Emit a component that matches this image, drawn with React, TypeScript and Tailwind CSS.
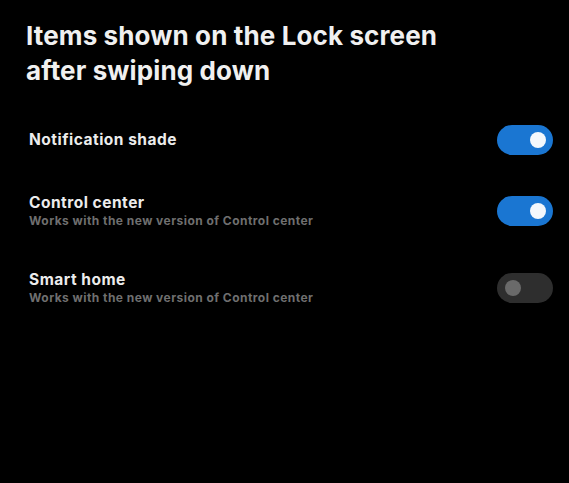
import React from "react";

type Item = { title: string; sub?: string; on: boolean; gap: string };

const items: Item[] = [
  { title: "Notification shade", on: true, gap: "mt-0" },
  { title: "Control center", sub: "Works with the new version of Control center", on: true, gap: "mt-[41px]" },
  { title: "Smart home", sub: "Works with the new version of Control center", on: false, gap: "mt-[47px]" },
];

function Toggle({ on }: { on: boolean }) {
  return on ? (
    <div className="flex h-[30px] w-[56px] shrink-0 items-center justify-end rounded-full bg-[#1a76d2] pr-[7px]">
      <div className="h-[16px] w-[16px] rounded-full bg-[#f4f8fc]" />
    </div>
  ) : (
    <div className="flex h-[30px] w-[56px] shrink-0 items-center rounded-full bg-[#2e2e2e] pl-[8px]">
      <div className="h-[16px] w-[16px] rounded-full bg-[#6a6a6a]" />
    </div>
  );
}

export default function App() {
  return (
    <div
      className="h-[483px] w-[569px] bg-black text-white"
      style={{ fontFamily: "Inter, Roboto, sans-serif" }}
    >
      <h1 className="pl-[26px] pt-[18px] text-[26px] font-bold leading-[35px] tracking-[0.12px] text-[#f0f0f0]">
        Items shown on the Lock screen
        <br />
        after swiping down
      </h1>
      <div className="mt-[37px] flex flex-col pl-[29px] pr-[16px]">
        {items.map((it) => (
          <div key={it.title} className={`flex h-[30px] items-center justify-between ${it.gap}`}>
            <div className="flex flex-col">
              <div className="text-[15.5px] font-bold leading-[18px] tracking-[0.5px] text-[#ececec]">{it.title}</div>
              {it.sub && (
                <div className="mt-[2px] text-[12px] font-bold leading-[14px] tracking-[0.46px] text-[#6f6f6f]">
                  {it.sub}
                </div>
              )}
            </div>
            <Toggle on={it.on} />
          </div>
        ))}
      </div>
    </div>
  );
}
